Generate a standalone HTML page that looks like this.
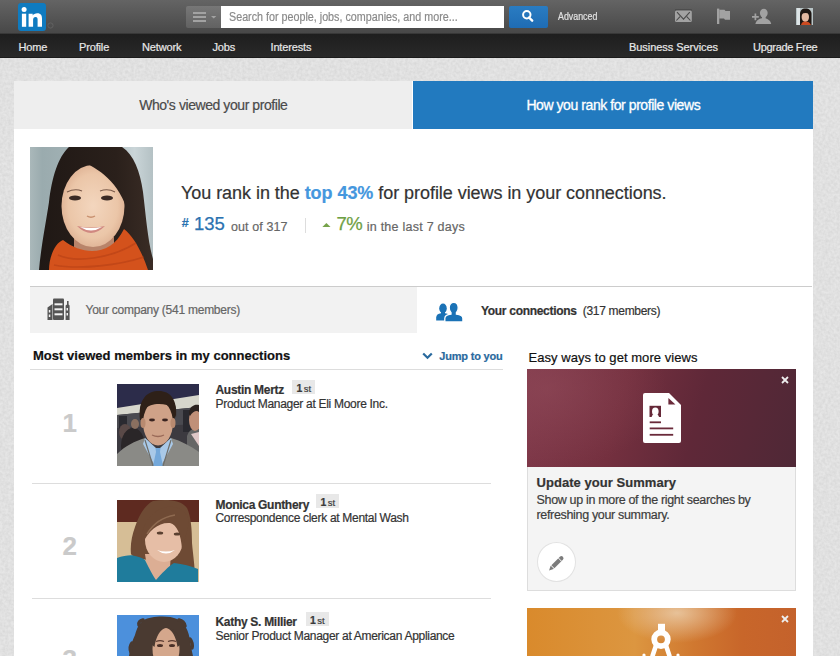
<!DOCTYPE html>
<html><head><meta charset="utf-8"><style>
html,body{margin:0;padding:0;}
body{width:840px;height:656px;overflow:hidden;position:relative;background:#e6e6e6;font-family:"Liberation Sans",sans-serif;}
.t{position:absolute;white-space:nowrap;-webkit-text-stroke-width:0.2px;}
.r{position:absolute;}
</style></head><body>
<div class="r" style="left:0px;top:0px;width:840px;height:34px;background:linear-gradient(#646464,#474747);"></div>
<div class="r" style="left:0px;top:33px;width:840px;height:1px;background:#383838;"></div>
<div class="r" style="left:0px;top:34px;width:840px;height:23px;background:linear-gradient(#1e1e1e,#292929);"></div>
<div class="r" style="left:0px;top:56.5px;width:840px;height:1px;background:#1c1c1c;"></div>
<div class="r" style="left:18px;top:3px;width:28px;height:28px;background:#0f7bc0;border-radius:3px;"></div>
<svg class="r" style="left:18px;top:3px" width="28" height="28" viewBox="0 0 28 28"><circle cx="6.1" cy="6.5" r="2.5" fill="#fff"/><rect x="3.9" y="10.7" width="4.3" height="13.1" fill="#fff"/><path d="M10.6 10.7h4.1v1.9c.8-1.4 2.5-2.3 4.6-2.3 3.7 0 4.7 2.3 4.7 5.4v8.1h-4.4v-7.1c0-1.6-.4-2.7-2-2.7-1.7 0-2.5 1.2-2.5 2.8v7h-4.5z" fill="#fff"/></svg>
<svg class="r" style="left:47px;top:22px" width="7" height="7" viewBox="0 0 7 7"><circle cx="3.5" cy="3.5" r="2.6" fill="none" stroke="#6a6a6a" stroke-width="0.7"/></svg>
<div class="r" style="left:186px;top:6px;width:34.5px;height:21.5px;background:linear-gradient(#777,#626262);border-radius:2px 0 0 2px;"></div>
<div class="r" style="left:193.2px;top:11.5px;width:12.8px;height:2.3px;background:#a2a2a2;"></div>
<div class="r" style="left:193.2px;top:16.2px;width:12.8px;height:2.3px;background:#a2a2a2;"></div>
<div class="r" style="left:193.2px;top:20.2px;width:12.8px;height:2.3px;background:#a2a2a2;"></div>
<svg class="r" style="left:211px;top:15.8px" width="6" height="3"><path d="M0 0h5.4L2.7 2.6z" fill="#a2a2a2"/></svg>
<div class="r" style="left:220.5px;top:6px;width:283.5px;height:21.7px;background:#fff;"></div>
<div class="t" style="left:229.4px;top:10.84px;font-size:12px;line-height:12px;transform:scaleX(0.895);transform-origin:0 0;color:#8a8a8a;">Search for people, jobs, companies, and more...</div>
<div class="r" style="left:509px;top:6px;width:39px;height:21.5px;background:linear-gradient(#2a7cc2,#1f6cb4);border-radius:2px;"></div>
<svg class="r" style="left:520px;top:9px" width="16" height="14" viewBox="0 0 16 14"><circle cx="6.8" cy="5.7" r="3.7" fill="none" stroke="#fff" stroke-width="2"/><path d="M9 8.5l3.2 3.2" stroke="#fff" stroke-width="2.4" stroke-linecap="round"/></svg>
<div class="t" style="left:557.6px;top:12.43px;font-size:10px;line-height:10px;transform:scaleX(0.885);transform-origin:0 0;color:#e0e0e0;">Advanced</div>
<svg class="r" style="left:674px;top:9px" width="19" height="14" viewBox="0 0 19 14"><rect x="1" y="0.3" width="16.8" height="1" fill="#3a3a3a" opacity="0.6"/><rect x="1" y="1.5" width="16.8" height="11.4" rx="1.5" fill="#a2a2a2"/><path d="M3 3.1L9.5 10.1 15.8 3.1M2.4 11.5L6 7.6M16.4 11.5L12.8 7.6" fill="none" stroke="#4a4a4a" stroke-width="1.1"/></svg>
<svg class="r" style="left:715px;top:8px" width="18" height="18" viewBox="0 0 18 18"><rect x="2" y="0.6" width="2.3" height="15.4" fill="#a2a2a2"/><path d="M4.3 1.8H9.5L10.5 3H15V11.8H10L9 10.5H4.3Z" fill="#a2a2a2"/></svg>
<svg class="r" style="left:750px;top:7px" width="24" height="20" viewBox="0 0 24 20"><path d="M2 9.9h6.8M5.4 6.6v6.7" stroke="#a2a2a2" stroke-width="1.7"/><ellipse cx="13.8" cy="6.1" rx="3.9" ry="4.4" fill="#a2a2a2"/><rect x="12" y="9" width="3.6" height="3" fill="#a2a2a2"/><path d="M5.4 17C6 13 9.5 11.2 13.3 11.2S20.6 13 21.2 17Z" fill="#a2a2a2"/></svg>
<svg class="r" style="left:796px;top:7.8px" width="17" height="17" viewBox="0 0 17 17"><rect width="17" height="17" fill="#b8c4c6"/><rect x="1" width="3" height="17" fill="#dde4e6"/><path d="M4 17V6C4 2.5 6 0.5 9.5 0.5S15.5 2.5 15.5 6V17z" fill="#1e1612"/><ellipse cx="9.3" cy="9" rx="3.7" ry="5" fill="#e3b8a0"/><path d="M5.5 6C6.5 2.5 12 2 13.5 6C11.5 4.5 8 4.5 5.5 6z" fill="#1e1612"/><path d="M5 17C5.5 14.5 7 13.5 9.5 13.5S14 14.5 15 17z" fill="#cc4a20"/></svg>
<div class="t" style="left:18.5px;top:41.89px;font-size:11px;line-height:11px;letter-spacing:-0.15px;color:#e8e8e8;">Home</div>
<div class="t" style="left:79px;top:41.89px;font-size:11px;line-height:11px;letter-spacing:-0.15px;color:#e8e8e8;">Profile</div>
<div class="t" style="left:142px;top:41.89px;font-size:11px;line-height:11px;letter-spacing:-0.15px;color:#e8e8e8;">Network</div>
<div class="t" style="left:212.5px;top:41.89px;font-size:11px;line-height:11px;letter-spacing:-0.15px;color:#e8e8e8;">Jobs</div>
<div class="t" style="left:270.5px;top:41.89px;font-size:11px;line-height:11px;letter-spacing:-0.15px;color:#e8e8e8;">Interests</div>
<div class="t" style="left:629px;top:41.89px;font-size:11px;line-height:11px;letter-spacing:-0.05px;color:#e8e8e8;">Business Services</div>
<div class="t" style="left:753px;top:41.89px;font-size:11px;line-height:11px;letter-spacing:-0.3px;color:#e8e8e8;">Upgrade Free</div>
<svg class="r" style="left:0;top:57px" width="840" height="599"><filter id="nz" x="0" y="0" width="100%" height="100%"><feTurbulence type="fractalNoise" baseFrequency="0.35" numOctaves="2" seed="3"/><feColorMatrix type="matrix" values="0 0 0 0 0  0 0 0 0 0  0 0 0 0 0  0.1 0 0 0 -0.025"/></filter><rect width="840" height="599" filter="url(#nz)" fill="#000"/></svg>
<div class="r" style="left:14px;top:81px;width:799px;height:575px;background:#fff;"></div>
<div class="r" style="left:14px;top:81px;width:398px;height:48px;background:#eeeeee;"></div>
<div class="r" style="left:413px;top:81px;width:400px;height:48px;background:#227abf;"></div>
<div class="t" style="left:13.300000000000011px;width:400px;text-align:center;top:98.35px;font-size:14px;line-height:14px;letter-spacing:-0.43px;color:#4a4a4a;">Who's viewed your profile</div>
<div class="t" style="left:413.29999999999995px;width:400px;text-align:center;top:98.35px;font-size:14px;line-height:14px;letter-spacing:-0.43px;color:#fff;-webkit-text-stroke:0.3px #fff;">How you rank for profile views</div>
<svg class="r" style="left:30px;top:147px" width="123" height="123" viewBox="0 0 123 123">
<defs><linearGradient id="bg1" x1="0" x2="1"><stop offset="0" stop-color="#aab8ba"/><stop offset="0.1" stop-color="#9aabae"/><stop offset="0.6" stop-color="#a9b8bb"/><stop offset="0.85" stop-color="#cad5d8"/><stop offset="1" stop-color="#b4c1c4"/></linearGradient>
<radialGradient id="sk1" cx="0.5" cy="0.5" r="0.6"><stop offset="0" stop-color="#f3d6be"/><stop offset="0.65" stop-color="#ebc6a8"/><stop offset="1" stop-color="#d8a88a"/></radialGradient>
<linearGradient id="hr1" gradientUnits="userSpaceOnUse" x1="0" y1="0" x2="123" y2="0"><stop offset="0" stop-color="#1e1714"/><stop offset="0.7" stop-color="#2a201b"/><stop offset="1" stop-color="#3a2c25"/></linearGradient></defs>
<rect width="123" height="123" fill="url(#bg1)"/>
<path d="M39 0H92C104 8 110 24 113 45C116 70 118 95 123 112V123H9C11 100 16 75 19 55C22 30 28 10 39 0Z" fill="url(#hr1)"/>
<path d="M44 90h40v18H44z" fill="#b8846a"/>
<ellipse cx="63" cy="59" rx="31.5" ry="41" fill="url(#sk1)"/>
<path d="M22 72C25 40 30 18 48 12C64 20 86 30 97 62L92 0H39Z" fill="url(#hr1)"/>
<ellipse cx="45" cy="51" rx="6" ry="2.4" fill="#3a2a25"/>
<ellipse cx="77" cy="51" rx="6" ry="2.4" fill="#3a2a25"/>
<path d="M37 45q8-4 15-1M70 44q8-3 15 1" stroke="#7a5a4a" stroke-width="1.1" fill="none"/>
<path d="M57 69q4 2.5 8 0" stroke="#c8906f" stroke-width="1.4" fill="none"/>
<path d="M47 79Q61 93 75 79Q61 82 47 79Z" fill="#d08880"/>
<path d="M50 80Q61 87 72 80Q61 82 50 80Z" fill="#fff"/>
<path d="M19 123C19 110 25 96 33 93C42 100 52 104 62 104C75 104 86 98 94 82C104 90 112 105 118 123Z" fill="#d4521c"/>
<path d="M28 108C45 116 80 112 106 96M24 118C50 123 90 118 114 110" stroke="#b03c14" stroke-width="1.6" fill="none" opacity="0.5"/>
</svg>
<div class="t" style="left:181px;top:183.56px;font-size:18px;line-height:18px;letter-spacing:-0.05px;color:#333;">You rank in the <span style="color:#4597de;font-weight:bold">top 43%</span> for profile views in your connections.</div>
<div class="t" style="left:181.8px;top:216.72px;font-size:12.5px;line-height:12.5px;color:#2a72b0;font-weight:bold;">#</div>
<div class="t" style="left:194px;top:215.34px;font-size:18.5px;line-height:18.5px;color:#2a72b0;-webkit-text-stroke:0.25px #2a72b0;">135</div>
<div class="t" style="left:231px;top:221.22px;font-size:12.5px;line-height:12.5px;letter-spacing:0.1px;color:#666;">out of 317</div>
<div class="r" style="left:305px;top:218px;width:1px;height:15px;background:#ddd;"></div>
<svg class="r" style="left:322px;top:222px" width="9" height="6"><path d="M0.4 5.1L4.4 0.9L8.5 5.1z" fill="#76a34a"/></svg>
<div class="t" style="left:336.5px;top:215.34px;font-size:18.5px;line-height:18.5px;letter-spacing:-0.6px;color:#6ea043;-webkit-text-stroke:0.25px #6ea043;">7%</div>
<div class="t" style="left:366.7px;top:221.22px;font-size:12.5px;line-height:12.5px;letter-spacing:0.25px;color:#666;">in the last 7 days</div>
<div class="r" style="left:30px;top:286px;width:782px;height:1px;background:#ccc;"></div>
<div class="r" style="left:30px;top:287px;width:387px;height:46px;background:#f2f2f2;"></div>
<svg class="r" style="left:47px;top:298px" width="23" height="22" viewBox="0 0 23 22"><path d="M0.5 9.5L5.5 6V22H0.5z" fill="#555"/><rect x="6" y="0.5" width="11" height="21.5" rx="1" fill="#555"/><rect x="7.5" y="5.3" width="8" height="2" fill="#f2f2f2"/><rect x="7.5" y="10.3" width="8" height="2" fill="#f2f2f2"/><rect x="7.5" y="15.3" width="8" height="2" fill="#f2f2f2"/><path d="M18.6 22V7.5L20 6.5V3h1.6v3.5L22.6 7.5V22z" fill="#555"/><rect x="1.8" y="12" width="1.5" height="2.5" fill="#f2f2f2"/><rect x="1.8" y="16.5" width="1.5" height="2.5" fill="#f2f2f2"/><rect x="19.5" y="10" width="1.5" height="2.5" fill="#f2f2f2"/><rect x="19.5" y="15" width="1.5" height="2.5" fill="#f2f2f2"/></svg>
<div class="t" style="left:85.5px;top:303.64px;font-size:12px;line-height:12px;letter-spacing:-0.25px;color:#666;">Your company (541 members)</div>
<svg class="r" style="left:436px;top:302px" width="28" height="21" viewBox="0 0 28 21"><g fill="#1a72b6"><ellipse cx="7" cy="6.4" rx="3.8" ry="4.8"/><rect x="5" y="9" width="4" height="3"/><path d="M0.2 18.6V15.5C0.2 13 2 11.6 5 11.2H9C11 11.4 12 12 12.5 12.8L9 18.6Z"/></g><g fill="#1a72b6" stroke="#fff" stroke-width="1.3"><path d="M8.8 19.9V16.5C8.8 14 11 12.6 15 12.2V10.5C13.5 9.5 13.2 7.8 13.2 5.8C13.2 2.5 15 0.3 17.7 0.3S22.2 2.5 22.2 5.8C22.2 7.8 21.9 9.5 20.4 10.5V12.2C24.4 12.6 26.9 14 26.9 16.5V19.9Z"/></g></svg>
<div class="t" style="left:481px;top:304.94px;font-size:12px;line-height:12px;letter-spacing:-0.3px;color:#333;"><b>Your connections</b>&nbsp; <span>(317 members)</span></div>
<div class="t" style="left:33px;top:349.00px;font-size:13px;line-height:13px;letter-spacing:0.02px;color:#111;font-weight:bold;">Most viewed members in my connections</div>
<svg class="r" style="left:422px;top:352px" width="11" height="8" viewBox="0 0 11 8"><path d="M1.2 1.5L5.5 5.8 9.8 1.5" fill="none" stroke="#2a6a9e" stroke-width="2.2"/></svg>
<div class="t" style="left:439.3px;top:350.69px;font-size:11px;line-height:11px;letter-spacing:-0.2px;color:#2a6a9e;font-weight:bold;">Jump to you</div>
<div class="r" style="left:30px;top:369px;width:473px;height:1px;background:#ddd;"></div>
<div class="t" style="left:528.5px;top:350.80px;font-size:13px;line-height:13px;letter-spacing:0.05px;color:#111;">Easy ways to get more views</div>
<div class="t" style="left:62.5px;top:409.79px;font-size:26px;line-height:26px;color:#cacaca;font-weight:bold;">1</div>
<div class="t" style="left:215.5px;top:383.64px;font-size:12px;line-height:12px;letter-spacing:-0.3px;color:#333;font-weight:bold;">Austin Mertz</div>
<div class="t" style="left:215.5px;top:397.64px;font-size:12px;line-height:12px;letter-spacing:-0.3px;color:#333;">Product Manager at Eli Moore Inc.</div>
<div class="t" style="left:62.5px;top:533.49px;font-size:26px;line-height:26px;color:#cacaca;font-weight:bold;">2</div>
<div class="t" style="left:215.5px;top:498.74px;font-size:12px;line-height:12px;letter-spacing:-0.3px;color:#333;font-weight:bold;">Monica Gunthery</div>
<div class="t" style="left:215.5px;top:512.14px;font-size:12px;line-height:12px;letter-spacing:-0.3px;color:#333;">Correspondence clerk at Mental Wash</div>
<div class="t" style="left:62.5px;top:646.29px;font-size:26px;line-height:26px;color:#cacaca;font-weight:bold;">3</div>
<div class="t" style="left:215.5px;top:615.84px;font-size:12px;line-height:12px;letter-spacing:-0.3px;color:#333;font-weight:bold;">Kathy S. Millier</div>
<div class="t" style="left:215.5px;top:629.64px;font-size:12px;line-height:12px;letter-spacing:-0.3px;color:#333;">Senior Product Manager at American Appliance</div>
<div class="r" style="left:32px;top:483px;width:459px;height:1px;background:#ddd;"></div>
<div class="r" style="left:32px;top:598px;width:459px;height:1px;background:#ddd;"></div>
<div class="r" style="left:292px;top:380px;width:23px;height:14px;background:#e8e8e8;"></div>
<div class="t" style="left:296.6px;top:382.91px;font-size:10.5px;line-height:10.5px;color:#3a3a3a;"><b>1</b> <span style="font-size:9.5px;margin-left:-1.5px">st</span></div>
<div class="r" style="left:315.5px;top:494.3px;width:23px;height:14px;background:#e8e8e8;"></div>
<div class="t" style="left:320.6px;top:497.41px;font-size:10.5px;line-height:10.5px;color:#3a3a3a;"><b>1</b> <span style="font-size:9.5px;margin-left:-1.5px">st</span></div>
<div class="r" style="left:305.5px;top:612px;width:23px;height:14px;background:#e8e8e8;"></div>
<div class="t" style="left:310.1px;top:614.91px;font-size:10.5px;line-height:10.5px;color:#3a3a3a;"><b>1</b> <span style="font-size:9.5px;margin-left:-1.5px">st</span></div>
<svg class="r" style="left:117px;top:384px" width="82" height="82" viewBox="0 0 82 82">
<rect width="82" height="82" fill="#3c3a40"/>
<path d="M0 0H82V12L0 24Z" fill="#2c2c4a"/>
<path d="M0 24L82 11V23L0 31Z" fill="#d6d6cc"/>
<path d="M0 31L82 23V40L0 44Z" fill="#4a4a50"/>
<rect x="2" y="32" width="8" height="16" fill="#2a2a30"/>
<rect x="66" y="26" width="10" height="22" fill="#2a2a30"/>
<ellipse cx="8" cy="48" rx="6" ry="8" fill="#5a4a48"/>
<ellipse cx="16" cy="62" rx="12" ry="18" fill="#2a2628"/>
<ellipse cx="18" cy="40" rx="4" ry="5" fill="#8a7060"/>
<path d="M70 82V52C72 46 76 44 82 44V82Z" fill="#666"/>
<ellipse cx="78" cy="36" rx="6" ry="11" fill="#c09078"/>
<path d="M72 30C72 22 78 20 82 21V28C80 26 76 27 73 32Z" fill="#2a2220"/>
<path d="M74 50L82 48V62Z" fill="#e0c8c8"/>
<ellipse cx="41" cy="27" rx="18" ry="19" fill="#2e2018"/>
<ellipse cx="41" cy="39" rx="15" ry="22.5" fill="#cfa288"/>
<ellipse cx="26" cy="39" rx="2.5" ry="5" fill="#b88a70"/><ellipse cx="56" cy="39" rx="2.5" ry="5" fill="#b88a70"/>
<path d="M23 36C21 18 28 8 40 7C52 6 61 14 59 34C57 26 54 22 50 21C42 19 32 20 28 25C26 28 25 32 24 36Z" fill="#2e2018"/>
<ellipse cx="35" cy="36" rx="3" ry="1.4" fill="#3a2420"/><ellipse cx="48" cy="36" rx="3" ry="1.4" fill="#3a2420"/>
<path d="M35 51q6 3 12 0" stroke="#9a6a58" stroke-width="1.3" fill="none"/>
<path d="M0 82V70C8 62 18 57 28 54L41 66 54 54C64 57 74 62 82 68V82Z" fill="#8a8a86"/>
<path d="M28 54L41 66 54 54 56 60 44 82H38L26 60Z" fill="#a9c9e8"/>
<path d="M38.5 64h5l-0.5 4 3 14h-10l3-14z" fill="#74a8da"/>
<path d="M28 56L36 82M54 56L46 82" stroke="#6e6e6a" stroke-width="1.2"/>
</svg>
<svg class="r" style="left:117px;top:500px" width="82" height="82" viewBox="0 0 82 82">
<rect width="82" height="82" fill="#d6be96"/>
<rect width="82" height="22" fill="#5e2a20"/>
<path d="M36 1C50 -1 64 0 70 8C74 16 75 30 75 43C76 55 78 65 78 82H60L30 60C22 58 16 58 14 54C13 45 15 35 18 27C22 15 28 5 36 1Z" fill="#6e4a34"/>
<path d="M28 54H54L52 80H32Z" fill="#dcae94"/>
<ellipse cx="47" cy="40" rx="19" ry="22" fill="#e6bea6"/>
<path d="M24 38C26 24 34 10 50 7C60 6 70 10 72 22C70 32 68 40 65 50C64 34 60 25 53 23C42 22 32 30 25 44Z" fill="#6e4a34"/>
<path d="M30 34C36 24 46 17 58 15" stroke="#8e6a50" stroke-width="1.5" fill="none"/>
<ellipse cx="43" cy="33" rx="3.2" ry="1.5" fill="#5a4030"/><ellipse cx="60" cy="34" rx="3.2" ry="1.5" fill="#5a4030"/>
<path d="M40 50Q49 57 58 50Q49 53 40 50Z" fill="#fff"/>
<path d="M0 82V58C6 56 12 55 16 55.5C22 57 26 58 28 60C32 68 36 76 39 80C44 74 52 66 57 63C66 64 74 66 81 69V82Z" fill="#1f7c9c"/>
</svg>
<svg class="r" style="left:117px;top:615px" width="82" height="41" viewBox="0 0 82 41">
<rect width="82" height="41" fill="#4c90dc"/>
<path d="M27 5C33 1 52 0 60 4C68 8 72 16 73 26C74 32 75 37 76 41H12C13 34 15 26 18 20C20 13 22 8 27 5Z" fill="#4a3a31"/>
<path d="M15 28q-3 4-1 9M73 24q3 4 2 9M22 10q-1-4 4-5M62 5q5 1 6 6" stroke="#4a3a31" stroke-width="3.5" fill="none" stroke-linecap="round"/>
<ellipse cx="49" cy="34" rx="13.5" ry="21" fill="#d4a78c"/>
<path d="M35 30C35 20 40 13 49 12.5C43 15 39 21 37.5 32Z" fill="#4a3a31"/>
<path d="M63 30C63 20 58 13 49 12.5C55 15 59 21 60.5 32Z" fill="#4a3a31"/>
<path d="M39 26.5q4-1.8 8 0M51 26.5q4-1.8 8 0" stroke="#5a3a30" stroke-width="1.3" fill="none"/>
<ellipse cx="43" cy="30.5" rx="3" ry="1.5" fill="#4a3028"/><ellipse cx="55" cy="30.5" rx="3" ry="1.5" fill="#4a3028"/>
</svg>
<div class="r" style="left:527px;top:369px;width:269px;height:222px;background:#f4f4f4;box-sizing:border-box;border:1px solid #ddd;"></div>
<div class="r" style="left:527px;top:369px;width:269px;height:98px;background:radial-gradient(ellipse 120px 80px at 20px 20px,rgba(150,80,95,0.45),rgba(150,80,95,0) 100%),linear-gradient(105deg,#80394a 0%,#74303f 35%,#5f2838 62%,#4f2836 100%);"></div>
<svg class="r" style="left:781px;top:376px" width="8" height="8" viewBox="0 0 8 8"><path d="M1 1L7 7M7 1L1 7" stroke="#eee" stroke-width="1.8"/></svg>
<svg class="r" style="left:643px;top:393px" width="38" height="50" viewBox="0 0 38 50">
<path d="M2 0H26L38 12V48a2 2 0 0 1-2 2H2a2 2 0 0 1-2-2V2a2 2 0 0 1 2-2z" fill="#fff"/>
<path d="M25.4 5.1V11.5H32.4z" fill="#6a2a3a"/>
<rect x="6.5" y="12.8" width="11.5" height="11.2" fill="#652838"/>
<ellipse cx="12.3" cy="18.6" rx="3.3" ry="4.1" fill="#fff"/><path d="M8.6 24.1C9 21.8 10.4 21.2 12.3 21.2S15.6 21.8 16 24.1Z" fill="#fff"/>
<rect x="6.7" y="28.4" width="11.3" height="1.8" fill="#6a2a3a"/>
<rect x="6.7" y="34.5" width="23.5" height="1.8" fill="#6a2a3a"/>
<rect x="6.7" y="40.9" width="23.5" height="1.8" fill="#6a2a3a"/>
</svg>
<div class="t" style="left:536.5px;top:475.80px;font-size:13px;line-height:13px;letter-spacing:0.05px;color:#333;font-weight:bold;">Update your Summary</div>
<div class="t" style="white-space:normal;left:536.5px;top:492.8px;width:240px;font-size:12.5px;line-height:14.8px;color:#3d3d3d;letter-spacing:-0.33px;-webkit-text-stroke:0.2px #3d3d3d">Show up in more of the right searches by refreshing your summary.</div>
<div class="r" style="left:537px;top:542px;width:39px;height:40px;background:#fff;border-radius:50%;box-sizing:border-box;border:1.5px solid #e2e2e2;"></div>
<svg class="r" style="left:537px;top:542px" width="40" height="40" viewBox="0 0 40 40"><g transform="translate(19 21.6) rotate(-45)"><path d="M-9.8 0L-5.6 -2.1H-5.2V2.1H-5.6Z" fill="#7c7c7c"/><path d="M-4.4 -2.1H7.6A2.1 2.1 0 0 1 7.6 2.1H-4.4Z" fill="#7c7c7c"/><rect x="5.2" y="-2.2" width="0.7" height="4.4" fill="#fff"/></g></svg>
<div class="r" style="left:527px;top:608px;width:269px;height:48px;background:radial-gradient(ellipse 60px 30px at 150px 5px,rgba(235,205,170,0.85),rgba(235,205,170,0) 100%),linear-gradient(90deg,#d98a2c 0%,#dc9640 40%,#d07830 62%,#c8662a 80%,#c4622c 100%);"></div>
<svg class="r" style="left:781px;top:615px" width="8" height="8" viewBox="0 0 8 8"><path d="M1 1L7 7M7 1L1 7" stroke="#eee" stroke-width="1.8"/></svg>
<svg class="r" style="left:640px;top:623px" width="42" height="33" viewBox="0 0 42 33">
<rect x="18" y="0.8" width="7" height="9" fill="#fff"/>
<circle cx="21" cy="16.3" r="6.8" fill="none" stroke="#fff" stroke-width="5.8"/>
<path d="M16.5 21L12.3 33.5M25.5 21L29.7 33.5" stroke="#fff" stroke-width="4.6"/>
<circle cx="4" cy="32" r="1.6" fill="#fff"/><circle cx="38" cy="32" r="1.6" fill="#fff"/>
</svg>
</body></html>
